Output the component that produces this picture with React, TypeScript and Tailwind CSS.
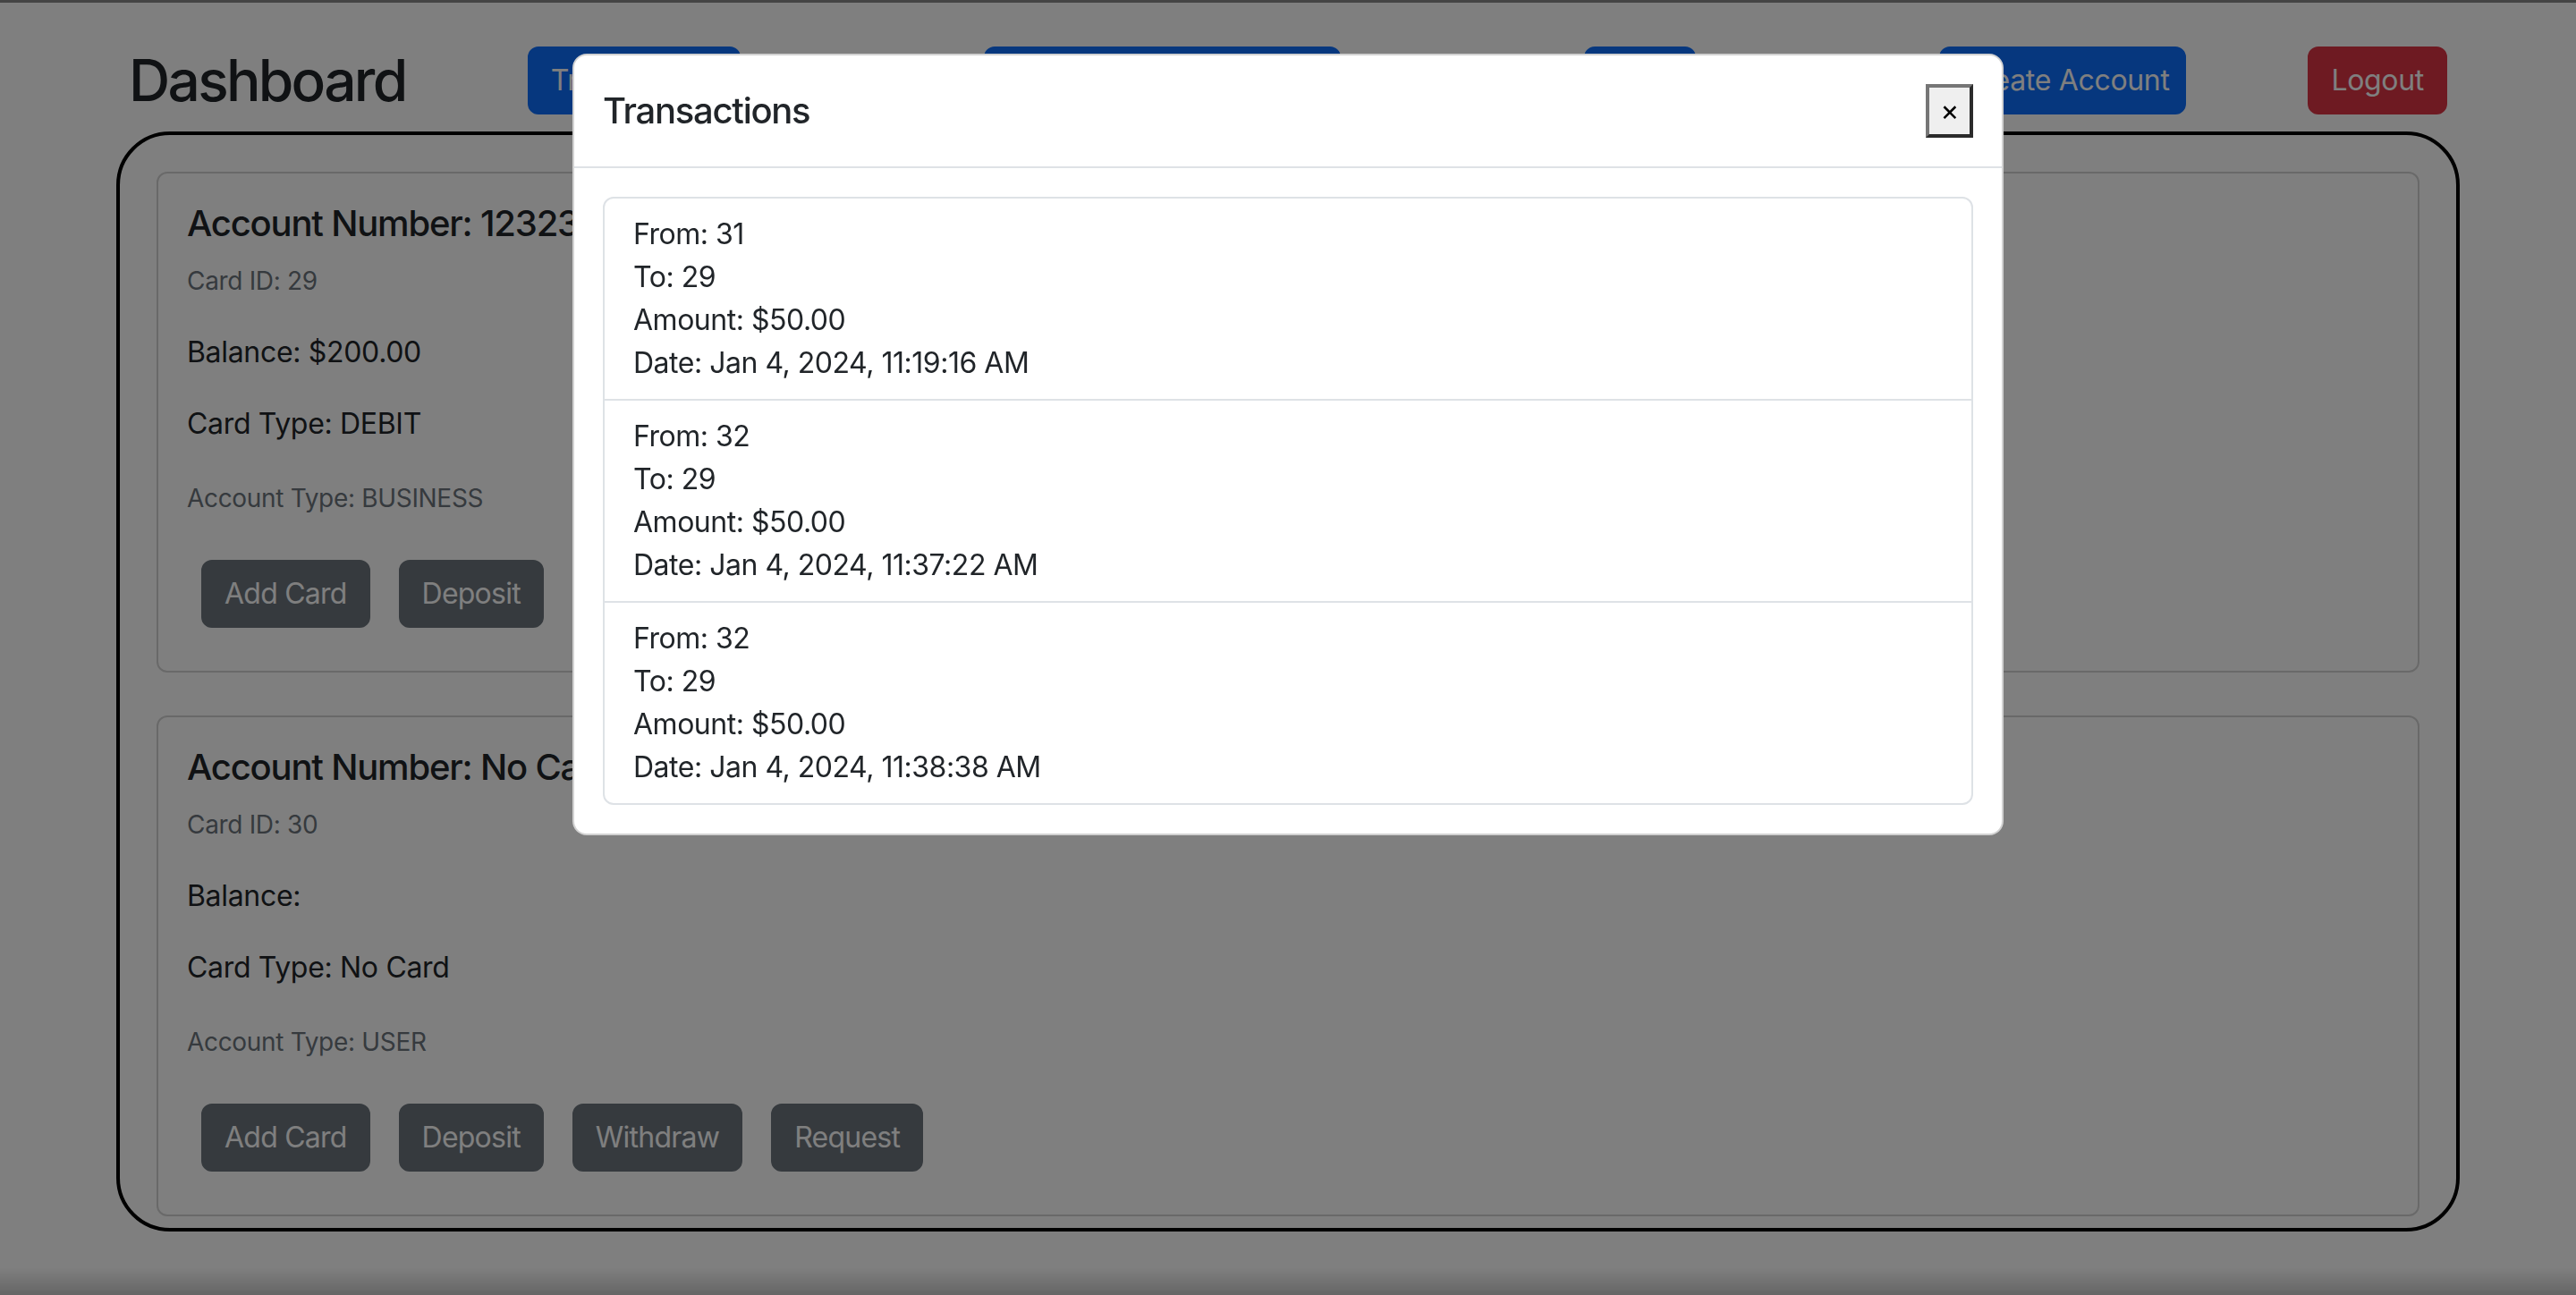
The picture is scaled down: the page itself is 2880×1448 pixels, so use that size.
import React from "react";

// Accounts shown on the dashboard
const accounts = [
	{
		number: "1232312345",
		cardId: 29,
		balance: "$200.00",
		cardType: "DEBIT",
		accountType: "BUSINESS",
	},
	{
		number: "No Card",
		cardId: 30,
		balance: "",
		cardType: "No Card",
		accountType: "USER",
	},
];

const transactions = [
	{ from: 31, to: 29, amount: "$50.00", date: "Jan 4, 2024, 11:19:16 AM" },
	{ from: 32, to: 29, amount: "$50.00", date: "Jan 4, 2024, 11:37:22 AM" },
	{ from: 32, to: 29, amount: "$50.00", date: "Jan 4, 2024, 11:38:38 AM" },
];

const btn =
	"h-[76px] rounded-[12px] border-2 px-[24px] text-[32px] leading-[48px] text-white whitespace-nowrap";

function AccountCard({ acc }: { acc: (typeof accounts)[number] }) {
	return (
		<div className="rounded-[12px] border-2 border-black/[0.175] p-[32px]">
			<h5 className="mb-[19px] text-[40px] font-medium leading-[48px] tracking-[-0.03em]">
				Account Number: {acc.number}
			</h5>
			<div className="mb-[35px] text-[28px] leading-[42px] text-[#6c757d]">
				Card ID: {acc.cardId}
			</div>
			<p className="mb-[32px] text-[32px] leading-[48px]">
				Balance: {acc.balance}
			</p>
			<p className="mb-[34px] text-[32px] leading-[48px]">
				Card Type: {acc.cardType}
			</p>
			<div className="mb-[44px] text-[28px] leading-[50px] text-[#6c757d]">
				Account Type: {acc.accountType}
			</div>
			<div className="mb-[16px] ml-[16px] flex gap-[32px]">
				{["Add Card", "Deposit", "Withdraw", "Request"].map((label) => (
					<button
						key={label}
						className={`${btn} border-[#6c757d] bg-[#6c757d] tracking-[-0.024em]`}
					>
						{label}
					</button>
				))}
			</div>
		</div>
	);
}

export default function App() {
	return (
		<div className="relative min-h-screen overflow-hidden bg-white font-['Inter','Liberation_Sans',sans-serif] tracking-[-0.02em] text-[#212529]">
			<div className="h-[3px] bg-[#888]" />

			{/* Header */}
			<div className="mx-auto w-[2640px] px-[24px] pt-[49px]">
				<div className="flex h-[76px] items-center">
					<h1 className="text-[64px] font-medium leading-[1.2] tracking-[-0.042em]">
						Dashboard
					</h1>
					<div className="flex flex-1 items-center justify-around">
						<button className={`${btn} w-[238px] border-[#0d6efd] bg-[#0d6efd] px-0`}>
							Transactions
						</button>
						<button className={`${btn} w-[399px] border-[#0d6efd] bg-[#0d6efd] px-0`}>
							Incoming Requests
						</button>
						<button className={`${btn} w-[125px] border-[#0d6efd] bg-[#0d6efd] px-0`}>
							Send
						</button>
						<button className={`${btn} w-[276px] border-[#0d6efd] bg-[#0d6efd] px-0`}>
							Create Account
						</button>
					</div>
					<button className={`${btn} border-[#dc3545] bg-[#dc3545]`}>Logout</button>
				</div>
			</div>

			{/* Accounts */}
			<div className="mx-auto mt-[19px] flex w-[2620px] flex-col gap-[48px] rounded-[60px] border-4 border-black px-[41px] pb-[13px] pt-[41px]">
				{accounts.map((acc) => (
					<AccountCard key={acc.cardId} acc={acc} />
				))}
			</div>

			{/* Backdrop */}
			<div className="fixed inset-0 bg-black/50" />
			<div className="fixed inset-x-0 bottom-0 h-[30px] bg-linear-to-b from-transparent to-black/20" />

			{/* Transactions modal */}
			<div className="fixed inset-0 flex items-start justify-center pt-[60px]">
				<div className="w-[1600px] rounded-[16px] border-2 border-black/[0.175] bg-white">
					<div className="flex items-center justify-between border-b-2 border-[#dee2e6] p-[32px]">
						<h5 className="text-[40px] font-medium leading-[60px] tracking-[-0.032em]">
							Transactions
						</h5>
						<button className="border-4 border-b-[#2b2b2b] border-l-[#767676] border-r-[#2b2b2b] border-t-[#767676] bg-[#efefef] px-[12px] py-[2px] text-[32px] leading-[48px] text-black">
							×
						</button>
					</div>
					<div className="p-[32px]">
						<ul className="rounded-[12px] border-2 border-[#dee2e6]">
							{transactions.map((t, i) => (
								<li
									key={i}
									className="border-b-2 border-[#dee2e6] px-[32px] py-[16px] text-[32px] leading-[48px] tracking-[-0.015em] last:border-b-0"
								>
									<div>From: {t.from}</div>
									<div>To: {t.to}</div>
									<div>Amount: {t.amount}</div>
									<div>Date: {t.date}</div>
								</li>
							))}
						</ul>
					</div>
				</div>
			</div>
		</div>
	);
}
